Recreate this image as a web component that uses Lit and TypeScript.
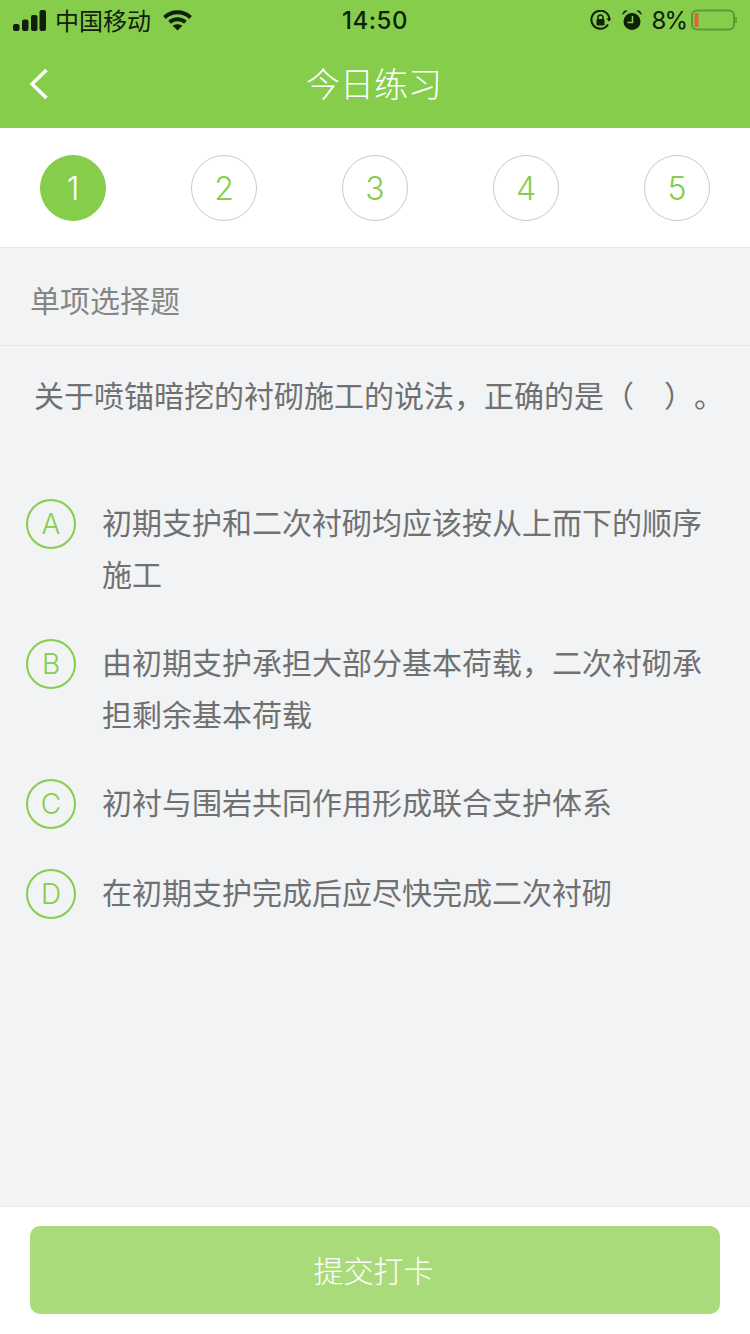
import { LitElement, css, html } from "lit";
import { customElement, state } from "lit/decorators.js";

@customElement("app-root")
export class AppRoot extends LitElement {
  @state() current = 1;

  steps = [1, 2, 3, 4, 5];
  options = [
    { key: "A", text: "初期支护和二次衬砌均应该按从上而下的顺序施工" },
    { key: "B", text: "由初期支护承担大部分基本荷载，二次衬砌承担剩余基本荷载" },
    { key: "C", text: "初衬与围岩共同作用形成联合支护体系" },
    { key: "D", text: "在初期支护完成后应尽快完成二次衬砌" },
  ];

  static styles = css`
    :host {
      display: block;
      width: 750px;
      height: 1334px;
      overflow: hidden;
      background: #f2f3f5;
      font-family: "Noto Sans CJK SC", sans-serif;
      font-weight: 400;
      text-spacing-trim: space-all;
    }
    .page {
      display: flex;
      flex-direction: column;
      height: 1334px;
    }
    .head {
      background: #86cd4c;
      height: 128px;
      flex: none;
    }
    .status {
      display: grid;
      grid-template-columns: 1fr auto 1fr;
      align-items: center;
      height: 40px;
      padding: 0 13px;
      color: #10200a;
      font-size: 24px;
    }
    .status-left,
    .status-right {
      display: flex;
      align-items: center;
    }
    .status-right {
      justify-content: flex-end;
    }
    .carrier {
      margin: 0 12px 0 9px;
      line-height: 40px;
    }
    .time {
      font-family: Inter, sans-serif;
      font-weight: 500;
      font-size: 24px;
      letter-spacing: 0.5px;
    }
    .pct {
      font-family: Inter, sans-serif;
      font-size: 24px;
      letter-spacing: -2px;
      margin: 0 5px 0 10px;
    }
    .alarm {
      margin-left: 11px;
    }
    .nav {
      display: flex;
      align-items: center;
      justify-content: center;
      position: relative;
      box-sizing: border-box;
      height: 88px;
      padding: 0 2px 4px 0;
      color: #fff;
      font-size: 34px;
      font-weight: 300;
    }
    .back {
      position: absolute;
      left: 28px;
      top: 28px;
    }
    .steps {
      display: flex;
      justify-content: space-between;
      flex: none;
      box-sizing: border-box;
      height: 120px;
      padding: 27px 40px 0;
      background: #fff;
      border-bottom: 1px solid #e6e6e6;
    }
    .step {
      display: flex;
      align-items: center;
      justify-content: center;
      box-sizing: border-box;
      width: 66px;
      height: 66px;
      border: 1px solid #c8c8c8;
      border-radius: 50%;
      color: #86cd4c;
      font-family: Inter, sans-serif;
      font-size: 32px;
      font-weight: 300;
    }
    .step.on {
      background: #86cd4c;
      border-color: #86cd4c;
      color: #fff;
    }
    .label {
      flex: none;
      box-sizing: border-box;
      height: 98px;
      line-height: 102px;
      padding-left: 30px;
      border-bottom: 1px solid #e4e5e7;
      color: #858585;
      font-size: 30px;
    }
    .question {
      margin: 0;
      padding: 22px 0 0 34px;
      font-size: 30px;
      line-height: 52px;
      color: #707070;
      white-space: pre;
    }
    .list {
      flex: 1;
      display: flex;
      flex-direction: column;
      gap: 36px;
      padding: 75px 40px 0 26px;
    }
    .option {
      display: flex;
      gap: 26px;
    }
    .badge {
      display: flex;
      flex: none;
      align-items: center;
      justify-content: center;
      box-sizing: border-box;
      width: 50px;
      height: 50px;
      margin-top: 4px;
      border: 2px solid #86cd4c;
      border-radius: 50%;
      color: #86cd4c;
      font-family: Inter, sans-serif;
      font-size: 28px;
      font-weight: 300;
    }
    .text {
      margin: 0;
      font-size: 30px;
      line-height: 52px;
      color: #707070;
    }
    .foot {
      flex: none;
      height: 128px;
      box-sizing: border-box;
      padding: 19px 30px 0;
      background: #fff;
      border-top: 1px solid #e8e9eb;
    }
    .submit {
      display: block;
      width: 100%;
      height: 88px;
      padding: 0 3px 3px 0;
      border: 0;
      border-radius: 10px;
      background: #aadb7a;
      color: #fff;
      font-family: inherit;
      font-weight: 300;
      font-size: 30px;
    }
  `;

  renderStatus() {
    return html`
      <div class="status">
        <div class="status-left">
          <svg width="33" height="21" viewBox="0 0 33 21" fill="#10200a">
            <rect x="0" y="14" width="6.500" height="7" rx="2"></rect>
            <rect x="9" y="9.500" width="6.500" height="11.500" rx="2"></rect>
            <rect x="18" y="5" width="6.500" height="16" rx="2"></rect>
            <rect x="26.500" y="0" width="6.500" height="21" rx="2"></rect>
          </svg>
          <span class="carrier">中国移动</span>
          <svg width="29" height="21" viewBox="0 0 29 21" fill="none" stroke="#10200a" stroke-width="4">
            <path d="M1.500 7.500C8.800 .6 20.200 .6 27.500 7.500"></path>
            <path d="M6.600 12.300c4.400-4 11.400-4 15.800 0"></path>
            <path d="M14.500 20.500l-4.800-4.800c2.700-2 6.900-2 9.600 0z" fill="#10200a" stroke="none"></path>
          </svg>
        </div>
        <div class="time">14:50</div>
        <div class="status-right">
          <svg width="21" height="21" viewBox="0 0 21 21" fill="none" stroke="#10200a" stroke-width="2">
            <path d="M18 14.500A9 9 0 1 1 19.400 9.500"></path>
            <path d="M16.400 8.600h5l-2.500 3z" fill="#10200a" stroke="none"></path>
            <rect x="6.500" y="9" width="8" height="6.500" rx="1" fill="#10200a" stroke="none"></rect>
            <path d="M8 9.500V7.600a2.500 2.500 0 0 1 5 0v1.900" stroke-width="1.500"></path>
          </svg>
          <svg class="alarm" width="20" height="22" viewBox="0 0 20 22" fill="#10200a">
            <circle cx="10" cy="12.500" r="8.500"></circle>
            <path d="M.5 6A4 4 0 0 1 5.500 1.500zM19.500 6a4 4 0 0 0-5-4.500z"></path>
            <path d="M10.500 7v6.500H5.500" fill="none" stroke="#86cd4c" stroke-width="1.600"></path>
          </svg>
          <span class="pct">8%</span>
          <svg width="46" height="22" viewBox="0 0 46 22" fill="none">
            <rect x="1" y="1.500" width="42" height="19" rx="5" stroke="#5c9a35" stroke-width="2"></rect>
            <rect x="3.500" y="4" width="4" height="14" rx="1" fill="#e2603a"></rect>
            <path d="M45 8v6" stroke="#5c9a35" stroke-width="1.600"></path>
          </svg>
        </div>
      </div>
    `;
  }

  render() {
    return html`
      <div class="page">
        <header class="head">
          ${this.renderStatus()}
          <div class="nav">
            <svg class="back" width="22" height="32" viewBox="0 0 22 32" fill="none" stroke="#fff" stroke-width="3.400">
              <path d="M18.500 2L4 16l14.500 14"></path>
            </svg>
            今日练习
          </div>
        </header>
        <div class="steps">
          ${this.steps.map(
            (n) => html`<div class="step ${n === this.current ? "on" : ""}">${n}</div>`
          )}
        </div>
        <div class="label">单项选择题</div>
        <p class="question">关于喷锚暗挖的衬砌施工的说法，正确的是（　）。</p>
        <div class="list">
          ${this.options.map(
            (o) => html`
              <div class="option">
                <div class="badge">${o.key}</div>
                <p class="text">${o.text}</p>
              </div>
            `
          )}
        </div>
        <footer class="foot">
          <button class="submit">提交打卡</button>
        </footer>
      </div>
    `;
  }
}
